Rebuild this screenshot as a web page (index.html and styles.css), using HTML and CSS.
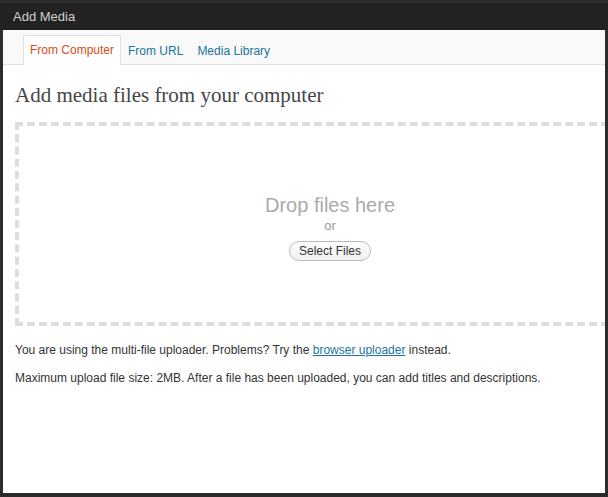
FILE: index.html
```html
<!DOCTYPE html>
<html>
<head>
<meta charset="utf-8">
<link rel="stylesheet" href="styles.css">
</head>
<body>
<div class="frame">
  <div class="titlebar">Add Media</div>
  <div class="content">
    <div class="tabs">
      <a class="tab active">From Computer</a>
      <a class="tab">From URL</a>
      <a class="tab">Media Library</a>
    </div>
    <div class="body">
      <h3 class="heading">Add media files from your computer</h3>
      <div class="dropzone">
        <p class="drop-text">Drop files here</p>
        <p class="or">or</p>
        <button class="select-btn">Select Files</button>
      </div>
      <p class="note">You are using the multi-file uploader. Problems? Try the <a class="link">browser uploader</a> instead.</p>
      <p class="note">Maximum upload file size: 2MB. After a file has been uploaded, you can add titles and descriptions.</p>
    </div>
  </div>
</div>
</body>
</html>
```
FILE: styles.css
```css
html, body {
  margin: 0;
  padding: 0;
}
body {
  width: 608px;
  height: 497px;
  overflow: hidden;
  font-family: "Liberation Sans", Arial, sans-serif;
}
.frame {
  width: 608px;
  height: 497px;
  box-sizing: border-box;
  background: #2c2c2c;
  padding: 3px 3px 4px 3px;
  display: flex;
  flex-direction: column;
}
.titlebar {
  margin: 0 -3px;
  height: 27px;
  background: #222;
  color: #cfcfcf;
  font-size: 13px;
  line-height: 27px;
  padding-left: 13px;
}
.content {
  flex: 1;
  background: #fff;
  overflow: hidden;
  display: flex;
  flex-direction: column;
}
.tabs {
  height: 35px;
  box-sizing: border-box;
  background: #f9f9f9;
  border-bottom: 1px solid #dfdfdf;
  padding: 6px 0 0 20px;
  display: flex;
  align-items: flex-end;
}
.tab {
  display: block;
  height: 29px;
  box-sizing: border-box;
  padding: 0 6px;
  font-size: 12px;
  line-height: 28px;
  color: #21759b;
  border: 1px solid transparent;
  border-bottom: none;
  margin-bottom: -1px;
  position: relative;
}
.tab.active {
  color: #d54e21;
  background: #fff;
  border-color: #dfdfdf;
  height: 30px;
}
.body {
  padding: 0 0 0 12px;
}
.heading {
  margin: 0;
  padding-top: 17px;
  font-family: "Liberation Serif", Georgia, serif;
  font-weight: normal;
  font-size: 21px;
  line-height: 26px;
  color: #464646;
  height: 26px;
}
.dropzone {
  margin-top: 14px;
  width: 630px;
  height: 204px;
  box-sizing: border-box;
  border: 4px dashed #ddd;
  display: flex;
  flex-direction: column;
  align-items: center;
  padding-top: 67px;
}
.drop-text {
  margin: 0;
  font-size: 20px;
  line-height: 24px;
  color: #aaa;
}
.or {
  margin: 0;
  font-size: 13px;
  line-height: 18px;
  color: #999;
}
.select-btn {
  margin-top: 6px;
  height: 20px;
  padding: 0 9px;
  border: 1px solid #bbb;
  border-radius: 11px;
  background: linear-gradient(#fefefe, #f0f0f0);
  font-family: "Liberation Sans", Arial, sans-serif;
  font-size: 12px;
  line-height: 18px;
  color: #333;
}
.note {
  margin: 17px 0 0 0;
  font-size: 12px;
  line-height: 14px;
  color: #333;
}
.note + .note {
  margin-top: 14px;
}
.link {
  color: #21759b;
  text-decoration: underline;
}
```
